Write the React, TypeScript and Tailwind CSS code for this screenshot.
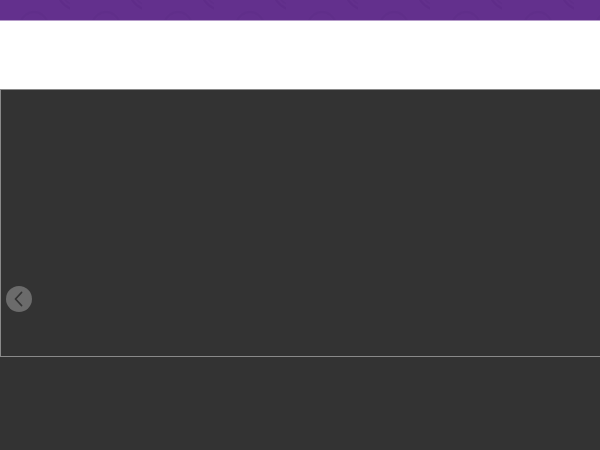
import React from "react";

const HeaderPattern = () => (
  <svg className="absolute inset-0 h-full w-full" aria-hidden="true">
    <defs>
      <pattern id="waves" width="72" height="20" patternUnits="userSpaceOnUse" x="-2">
        <path
          d="M60 -6 C62 4 70 8 76 10 C82 8 90 4 92 -6"
          fill="none"
          stroke="#4f1f78"
          strokeWidth="2.5"
          opacity="0.2"
        />
        <path
          d="M64 -6 C66 1 72 4 76 5 C80 4 86 1 88 -6"
          fill="none"
          stroke="#4f1f78"
          strokeWidth="2"
          opacity="0.15"
        />
        <path
          d="M22 24 C24 16 30 12 36 12 C42 12 48 16 50 24"
          fill="none"
          stroke="#4f1f78"
          strokeWidth="2.5"
          opacity="0.15"
        />
      </pattern>
    </defs>
    <rect width="100%" height="100%" fill="url(#waves)" />
  </svg>
);

const App = () => {
  return (
    <div className="flex h-[450px] w-[600px] flex-col overflow-hidden bg-[#333333] font-['Liberation_Sans',sans-serif]">
      <header className="relative h-[21px] shrink-0 overflow-hidden border-b border-[#b49ac8] bg-[#63308d]">
        <HeaderPattern />
      </header>
      <div className="h-[68px] shrink-0 bg-white" />
      <section className="relative flex h-[268px] shrink-0 items-center border-l border-t border-b border-[#8a8a8a] bg-[#333333]">
        <button
          type="button"
          aria-label="Previous"
          className="absolute left-[5px] top-[196px] flex h-[26px] w-[26px] items-center justify-center rounded-full bg-[#6b6b6b]"
        >
          <svg width="16" height="16" viewBox="0 0 16 16" fill="none">
            <path d="M10.5 1.5 L4.5 8 L10.5 14.5" stroke="#333333" strokeWidth="1.8" strokeLinecap="round" strokeLinejoin="round" />
          </svg>
        </button>
      </section>
      <div className="flex-1 bg-[#333333]" />
    </div>
  );
};

export default App;
